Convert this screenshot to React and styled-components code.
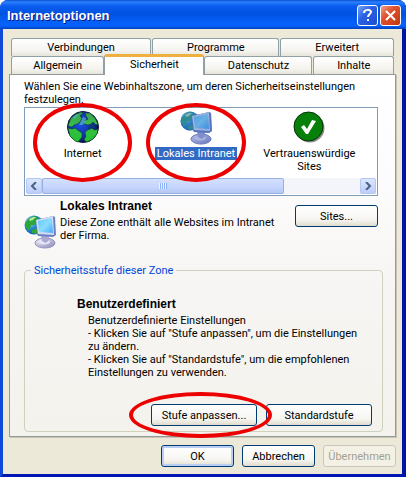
import React, { useState } from "react";
import styled, { createGlobalStyle, css } from "styled-components";

const rowOne = [
  { id: "verbindungen", label: "Verbindungen", grow: 140 },
  { id: "programme", label: "Programme", grow: 127 },
  { id: "erweitert", label: "Erweitert", grow: 113 },
];

const rowTwo = [
  { id: "allgemein", label: "Allgemein", grow: 93 },
  { id: "sicherheit", label: "Sicherheit", grow: 100 },
  { id: "datenschutz", label: "Datenschutz", grow: 108 },
  { id: "inhalte", label: "Inhalte", grow: 80 },
];

const zones = [
  { id: "internet", label: "Internet", icon: GlobeIcon, marked: true },
  { id: "intranet", label: "Lokales Intranet", icon: IntranetIcon, marked: true },
  { id: "trusted", label: "Vertrauenswürdige Sites", icon: TrustedIcon },
];

function GlobeIcon() {
  return (
    <svg width="32" height="32" viewBox="0 0 32 32" aria-hidden="true">
      <defs>
        <radialGradient id="sea" cx="0.4" cy="0.4" r="0.65">
          <stop offset="0" stopColor="#1c50e0" />
          <stop offset="0.65" stopColor="#1230a8" />
          <stop offset="1" stopColor="#04083c" />
        </radialGradient>
        <linearGradient id="land" x1="0" y1="0" x2="0" y2="1">
          <stop offset="0" stopColor="#3a9c50" />
          <stop offset="0.45" stopColor="#38c048" />
          <stop offset="1" stopColor="#22c030" />
        </linearGradient>
      </defs>
      <circle cx="16" cy="16" r="15.5" fill="url(#sea)" stroke="#0b1a3c" />
      <path
        d="M2 12 4 7 9 3l5-2 2 1-3 3 2 2-2 4-3 2-3 1-2 2-4-1zM1 17l4 1 3-1 4 3 3 2 0 4-4 5-3-1-5-5zM18 2l5 0 5 5 3 6-2 1-3-3-2 2-3 1-4-1 0-3 4-2-2-3zM19 20l5-3 4 2 3-1-1 5-4 5-6 3-3-2 2-4-1-3z"
        fill="url(#land)"
        stroke="#0c3b22"
        strokeWidth="0.6"
      />
      <path d="M16 6l3 1-1 5-3 2-3 0 2-4zM6 6l3-2 3-1-2 3-3 2z" fill="#5cb4c8" opacity="0.7" />
      <path d="M21 16l5-3 3 3-4 1-3 2z" fill="#0b3a78" />
    </svg>
  );
}

function IntranetIcon({ tinted }) {
  return (
    <svg width="32" height="34" viewBox="0 0 32 34" aria-hidden="true">
      <defs>
        <radialGradient id="smallSea" cx="0.3" cy="0.3" r="0.8">
          <stop offset="0" stopColor="#a8e4f4" />
          <stop offset="0.5" stopColor="#2488d0" />
          <stop offset="1" stopColor="#0b4ea8" />
        </radialGradient>
        <linearGradient id="screen" x1="0" y1="0" x2="1" y2="1">
          <stop offset="0" stopColor="#58c8f8" />
          <stop offset="0.5" stopColor="#8cdcff" />
          <stop offset="1" stopColor="#48a8f4" />
        </linearGradient>
        <linearGradient id="foot" x1="0" y1="0" x2="1" y2="1">
          <stop offset="0" stopColor="#f0f0fa" />
          <stop offset="1" stopColor="#8c88b8" />
        </linearGradient>
        <filter id="tint">
          <feFlood floodColor="#316ac5" floodOpacity="0.5" />
          <feComposite in2="SourceAlpha" operator="in" result="veil" />
          <feMerge>
            <feMergeNode in="SourceGraphic" />
            <feMergeNode in="veil" />
          </feMerge>
        </filter>
      </defs>
      <g filter={tinted ? "url(#tint)" : undefined}>
        <circle cx="10" cy="10" r="9.5" fill="url(#smallSea)" />
        <path d="M1 8l4-5 5-2 5 2-3 3 0 4-5 0-1 5-2 0-3-4zM8 15l5-2 3 4-4 2-4-1z" fill="#2da63a" />
        <path d="M5 4l4-2 3 0-3 3-3 1z" fill="#b4e8a0" />
        <ellipse cx="21" cy="28" rx="10" ry="5" fill="url(#foot)" stroke="#9490c0" />
        <ellipse cx="20" cy="27" rx="6" ry="2.5" fill="#e4e4f4" />
        <path d="M17 20l8 0 0 5-3 3-4-2z" fill="#a8a8d0" />
        <path d="M12 5 29 1l2 1 1 18-3 2-15-1-1-2z" fill="#6c80c0" />
        <path d="M12 5 29 1l1 19-16-1z" fill="#d4dcf4" />
        <path d="M14 6 28 3l1 15-14-1z" fill="url(#screen)" />
      </g>
    </svg>
  );
}

function TrustedIcon() {
  return (
    <svg width="32" height="32" viewBox="0 0 32 32" aria-hidden="true">
      <circle cx="17" cy="17" r="14.5" fill="#8c8c8c" />
      <circle cx="15.5" cy="15.5" r="14.5" fill="#068008" stroke="#07300a" />
      <path d="M8 16l3-2 3 4 5-9 4 1-8 13-2 0z" fill="#fff" />
    </svg>
  );
}

function Chevron({ flip }) {
  return (
    <svg width="8" height="8" viewBox="0 0 8 8" aria-hidden="true">
      <path d={flip ? "M2 0l4 4-4 4" : "M6 0 2 4l4 4"} fill="none" stroke="#4d6185" strokeWidth="2" />
    </svg>
  );
}

export default function App() {
  const [tab, setTab] = useState("sicherheit");
  const [zone, setZone] = useState("intranet");

  const renderTab = ({ id, label, grow }) => (
    <Tab
      key={id}
      type="button"
      role="tab"
      aria-selected={tab === id}
      $grow={grow}
      $active={tab === id}
      onClick={() => setTab(id)}
    >
      {label}
    </Tab>
  );

  return (
    <>
      <GlobalStyle />
      <Dialog>
        <TitleBar>
          <Title>Internetoptionen</Title>
          <TitleButton type="button" aria-label="Hilfe">
            <svg width="15" height="15" viewBox="0 0 15 15" aria-hidden="true">
              <path d="M4 5c0-4 7-4 7-1 0 2-3 2-3 5M8 11v2" fill="none" stroke="#fff" strokeWidth="2" />
            </svg>
          </TitleButton>
          <TitleButton type="button" aria-label="Schließen" $close>
            <svg width="15" height="15" viewBox="0 0 15 15" aria-hidden="true">
              <path d="M3 3l9 9M12 3l-9 9" fill="none" stroke="#fff" strokeWidth="2" />
            </svg>
          </TitleButton>
        </TitleBar>
        <Body>
          <Tabs role="tablist">
            <TabRow>{rowOne.map(renderTab)}</TabRow>
            <TabRow>{rowTwo.map(renderTab)}</TabRow>
          </Tabs>
          <Panel role="tabpanel">
            <Intro>
              Wählen Sie eine Webinhaltszone, um deren Sicherheitseinstellungen festzulegen.
            </Intro>
            <ZoneBox>
              <ZoneList>
                {zones.map(({ id, label, icon: Icon, marked }) => (
                  <Zone key={id} type="button" aria-pressed={zone === id} onClick={() => setZone(id)}>
                    <ZoneIcon>
                      <Icon tinted={zone === id} />
                    </ZoneIcon>
                    <ZoneLabel $selected={zone === id}>{label}</ZoneLabel>
                    {marked && <ZoneMark />}
                  </Zone>
                ))}
              </ZoneList>
              <ScrollBar>
                <ScrollButton type="button" aria-label="Nach links">
                  <Chevron />
                </ScrollButton>
                <Track>
                  <Thumb>
                    <Grip />
                  </Thumb>
                </Track>
                <ScrollButton type="button" aria-label="Nach rechts">
                  <Chevron flip />
                </ScrollButton>
              </ScrollBar>
            </ZoneBox>
            <ZoneInfo>
              <InfoIcon>
                <IntranetIcon />
              </InfoIcon>
              <InfoText>
                <Heading>Lokales Intranet</Heading>
                <p>Diese Zone enthält alle Websites im Intranet der Firma.</p>
              </InfoText>
              <Button type="button" $width={83}>
                Sites...
              </Button>
            </ZoneInfo>
            <Level>
              <legend>Sicherheitsstufe dieser Zone</legend>
              <LevelText>
                <Heading>Benutzerdefiniert</Heading>
                <Details>
                  Benutzerdefinierte Einstellungen
                  <br />
                  - Klicken Sie auf "Stufe anpassen", um die Einstellungen
                  <br />
                  zu ändern.
                  <br />
                  - Klicken Sie auf "Standardstufe", um die empfohlenen
                  <br />
                  Einstellungen zu verwenden.
                </Details>
              </LevelText>
              <LevelButtons>
                <Marked>
                  <Button type="button" $width={106}>
                    Stufe anpassen...
                  </Button>
                  <ButtonMark />
                </Marked>
                <Button type="button" $width={106}>
                  Standardstufe
                </Button>
              </LevelButtons>
            </Level>
          </Panel>
          <Footer>
            <Button type="button" $width={73} $primary>
              OK
            </Button>
            <Button type="button" $width={73}>
              Abbrechen
            </Button>
            <Button type="button" $width={73} disabled>
              Übernehmen
            </Button>
          </Footer>
        </Body>
      </Dialog>
    </>
  );
}

const GlobalStyle = createGlobalStyle`
  * {
    box-sizing: border-box;
  }
  body {
    margin: 0;
    background: #fff;
    color: #000;
    font: 11px/13px Roboto, "Liberation Sans", sans-serif;
  }
  button {
    font: inherit;
    color: inherit;
    padding: 0;
  }
  p, h2 {
    margin: 0;
  }
`;

const Dialog = styled.main`
  min-height: 100vh;
  display: flex;
  flex-direction: column;
  border: solid;
  border-width: 0 4px 4px 3px;
  border-color: #0a3fd8 #0016a0 #0016b4 #1048d8;
  border-radius: 8px 8px 0 0;
  background: #0855e4;
`;

const TitleBar = styled.header`
  display: flex;
  align-items: center;
  gap: 2px;
  height: 29px;
  margin: 0 -4px 0 -3px;
  padding: 2px 5px 0 7px;
  border-radius: 8px 8px 0 0;
  background: linear-gradient(#0a4fd0 0, #2a80ff 2px, #0a5cf0 6px, #0053e0 14px, #0560f8 22px, #0660fb 26px, #0340b8 29px);
`;

const Title = styled.h1`
  flex: 1;
  margin: 0;
  color: #fff;
  font: bold 13px/16px "Liberation Sans", Arial, sans-serif;
  text-shadow: 1px 1px #0a1883;
`;

const TitleButton = styled.button`
  display: grid;
  place-items: center;
  width: 21px;
  height: 21px;
  border: 1px solid #fff;
  border-radius: 3px;
  background: ${({ $close }) =>
    $close
      ? "linear-gradient(135deg, #f0a08c, #e0502c 40%, #c03810)"
      : "linear-gradient(135deg, #7ca4f8, #2c62e4 40%, #1c4ed0)"};
`;

const Body = styled.div`
  flex: 1;
  display: flex;
  flex-direction: column;
  padding: 9px 6px 7px;
  background: #ece9d8;
`;

const Tabs = styled.div`
  padding: 0 2px;
`;

const TabRow = styled.div`
  display: flex;
  gap: 1px;
  height: 18px;
`;

const Tab = styled.button`
  flex: ${({ $grow }) => $grow} 1 0;
  border: 1px solid #91a0a5;
  border-bottom: 0;
  border-radius: 3px 3px 0 0;
  background: linear-gradient(#fff, #f4f3ee 70%, #e6e4da);
  ${({ $active }) =>
    $active &&
    css`
      position: relative;
      z-index: 1;
      margin: -2px -1px -1px;
      padding-bottom: 4px;
      border-top: 3px solid #f0b040;
      background: #fff;
    `}
`;

const Panel = styled.section`
  flex: 1;
  display: flex;
  flex-direction: column;
  padding: 5px 12px 4px 14px;
  border: 1px solid #919b9c;
  box-shadow: 1px 1px #c8c5b4;
  background: linear-gradient(#fff, #fdfcfc 30%, #f6f5f3 60%, #f4f2ec);
`;

const Intro = styled.p`
  margin-right: 16px;
`;

const ZoneBox = styled.div`
  margin: 1px 5px 0 0;
  padding: 1px;
  border: 1px solid #7f9db9;
  background: #fff;
`;

const ZoneList = styled.div`
  display: grid;
  grid-template-columns: repeat(3, 1fr);
  height: 69px;
  padding: 2px 10px 0 0;
`;

const Zone = styled.button`
  position: relative;
  display: flex;
  flex-direction: column;
  align-items: center;
  gap: 4px;
  border: 0;
  background: none;
`;

const ZoneIcon = styled.span`
  height: 32px;
`;

const ZoneLabel = styled.span`
  max-width: 98px;
  padding: 0 2px;
  ${({ $selected }) =>
    $selected &&
    css`
      color: #fff;
      background: #316ac5;
    `}
`;

const mark = css`
  position: absolute;
  z-index: 2;
  border: 4px solid #ec0000;
  border-radius: 50%;
  pointer-events: none;
`;

const ZoneMark = styled.span`
  ${mark}
  inset: -8px 7px auto;
  height: 79px;
`;

const ScrollBar = styled.div`
  display: flex;
  height: 16px;
  background: #f4f4fb;
`;

const ScrollButton = styled.button`
  display: grid;
  place-items: center;
  width: 16px;
  border: 1px solid #b4c8f4;
  border-radius: 2px;
  background: linear-gradient(#dce6fe, #bccdfa);
`;

const Track = styled.div`
  flex: 1;
  display: flex;
`;

const Thumb = styled.div`
  display: grid;
  place-items: center;
  width: 76%;
  border: 1px solid #98b0e0;
  border-radius: 2px;
  background: linear-gradient(#d4e0fe, #c4d4fc 60%, #b4c6f4);
`;

const Grip = styled.span`
  width: 8px;
  height: 6px;
  background: repeating-linear-gradient(90deg, #eef4fe 0 1px, #8cb0f8 1px 2px);
`;

const ZoneInfo = styled.div`
  display: flex;
  gap: 4px;
  margin: 4px 5px 0 0;

  button {
    margin-top: 5px;
  }
`;

const InfoIcon = styled.span`
  padding-top: 15px;
`;

const InfoText = styled.div`
  flex: 1;
`;

const Heading = styled.h2`
  margin-bottom: 3px;
  font: bold 12px/13px "Liberation Sans", Arial, sans-serif;
`;

const Button = styled.button`
  width: ${({ $width }) => $width}px;
  height: 22px;
  border: 1px solid #003c74;
  border-radius: 3px;
  background: linear-gradient(#fff, #f6f5f0 70%, #e0dccc);
  ${({ $primary }) =>
    $primary &&
    css`
      box-shadow: inset 0 0 0 2px #b8d0f4;
    `}
  &:disabled {
    border-color: #c9c7ba;
    color: #a1a192;
    background: #f3f1e6;
  }
`;

const Level = styled.fieldset`
  min-width: 0;
  margin: 12px 0 0;
  padding: 21px 10px 5px;
  border: 1px solid #d0d0bf;
  border-radius: 4px;
  legend {
    margin-left: -4px;
    padding: 0 3px;
    color: #0046d5;
  }
`;

const LevelText = styled.div`
  padding-left: 42px;
`;

const Details = styled.p`
  padding-left: 11px;
  white-space: nowrap;
`;

const LevelButtons = styled.div`
  display: flex;
  justify-content: flex-end;
  gap: 9px;
  margin-top: 25px;
`;

const Marked = styled.div`
  position: relative;
`;

const ButtonMark = styled.span`
  ${mark}
  inset: -12px -15px -12px -22px;
`;

const Footer = styled.footer`
  display: flex;
  justify-content: flex-end;
  gap: 8px;
  padding-top: 8px;
`;
